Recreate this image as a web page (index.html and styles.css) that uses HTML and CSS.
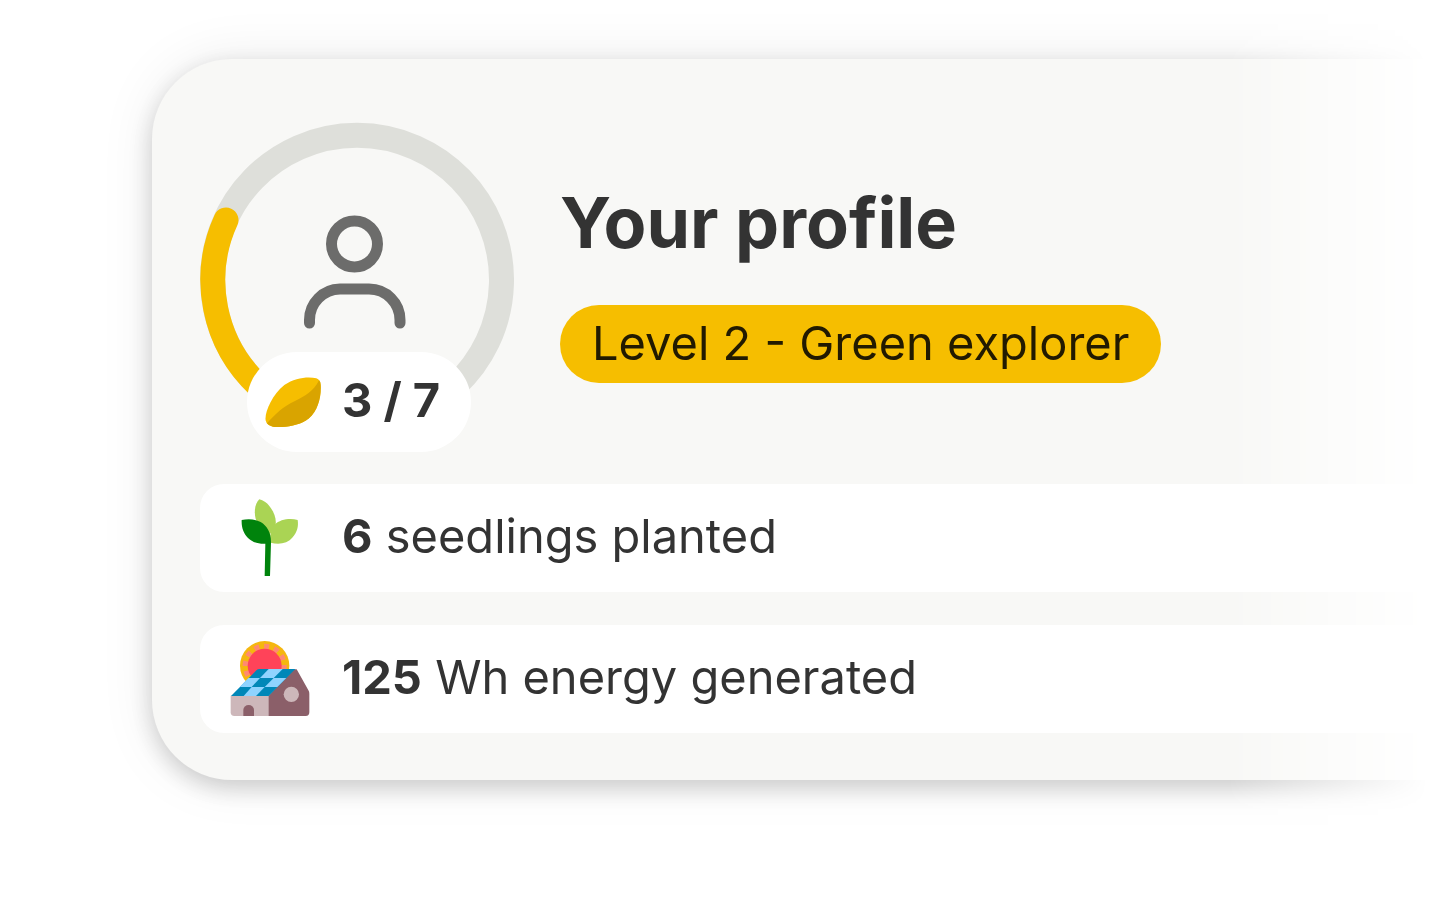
FILE: index.html
```html
<!DOCTYPE html>
<html lang="en">
<head>
    <meta charset="UTF-8">
    <meta name="viewport" content="width=device-width, initial-scale=1.0">
    <title>Your profile</title>
    <link rel="stylesheet" href="styles.css">
</head>
<body>
    <main class="stage">
        <section class="card">
            <header class="profile">
                <div class="progress">
                    <svg class="ring" viewBox="0 0 314 314" aria-hidden="true">
                        <path d="M255 264 A144.500 144.500 0 1 0 59 264" fill="none" stroke="#dedfda" stroke-width="25"/>
                        <path d="M59 264 A144.500 144.500 0 0 1 26 98" fill="none" stroke="#f6be00" stroke-width="25" stroke-linecap="round"/>
                        <g fill="none" stroke="#6c6c6b" stroke-width="11" stroke-linecap="round">
                            <circle cx="154.500" cy="122" r="23"/>
                            <path d="M109.500 201 V198 A31 31 0 0 1 140 167 H169 A31 31 0 0 1 200 198 V201"/>
                        </g>
                    </svg>
                    <div class="leaves">
                        <svg class="leaf" viewBox="0 0 168 150" aria-hidden="true">
                            <path d="M2 130 C-2 108 20 55 58 24 C90 2 130 -2 154 4 Q166 8 167 24 C169 62 158 100 132 124 C104 148 50 153 24 149 Q5 146 2 130Z" fill="#f6be00"/>
                            <path d="M6 139 C30 112 52 90 90 72 C122 56 145 44 162 10 Q167 14 167 24 C169 62 158 100 132 124 C104 148 50 153 24 149 Q11 147 6 139Z" fill="#d9a400"/>
                        </svg>
                        <strong>3 / 7</strong>
                    </div>
                </div>
                <div class="info">
                    <h1>Your profile</h1>
                    <span class="level">Level 2 - Green explorer</span>
                </div>
            </header>

            <ul class="stats">
                <li>
                    <svg class="icon" viewBox="0 0 240 240" aria-hidden="true">
                        <path d="M88 4 C76 14 71 40 77 62 C83 80 98 94 118 110 L136 88 C141 62 132 42 118 24 C110 14 100 7 88 4Z" fill="#aad454"/>
                        <path d="M203 66 C180 60 150 64 134 80 C122 94 118 114 122 134 C145 140 172 138 188 118 C202 102 206 84 203 66Z" fill="#aad454"/>
                        <path d="M35 66 C34 88 40 106 54 120 C68 134 88 138 106 137 L104 234 H120 L123 134 C124 106 112 84 92 72 C76 63 54 62 35 66Z" fill="#00830c"/>
                    </svg>
                    <p><strong>6</strong> seedlings planted</p>
                </li>
                <li>
                    <svg class="icon" viewBox="0 0 240 240" aria-hidden="true">
                        <circle cx="104" cy="80" r="74" fill="#f5b70f"/>
                        <circle cx="104" cy="80" r="58" fill="none" stroke="#ff8a70" stroke-width="16" stroke-dasharray="15 15"/>
                        <circle cx="104" cy="80" r="51" fill="#ff4359"/>
                        <path d="M2 170 H118 V231 H13 Q2 231 2 220Z" fill="#cdb7ba"/>
                        <path d="M40 231 V213 A16 15 0 0 1 72 213 V231Z" fill="#8b5f69"/>
                        <path d="M116 170 L192 91 H200 L236 155 Q238 158 238 164 V220 Q238 231 227 231 H116Z" fill="#8b5f69"/>
                        <circle cx="184" cy="166" r="23" fill="#cdb7ba"/>
                        <path d="M3 171 L80 93 Q83 90 88 90 H196 L116 171Z" fill="#0087b8"/>
                        <g fill="#8fd3ff">
                            <path d="M116 90 H158 L131 117 H90Z"/>
                            <path d="M55 117 H90 L65 144 H29Z"/>
                            <path d="M131 117 H169 L142 144 H104Z"/>
                            <path d="M65 144 H104 L78 171 H41Z"/>
                        </g>
                    </svg>
                    <p><strong>125</strong> Wh energy generated</p>
                </li>
            </ul>
        </section>
    </main>
</body>
</html>
```

FILE: styles.css
```css
* {
    box-sizing: border-box;
}
body {
    margin: 0;
    background-color: #fff;
    color: #333;
    font-family: Inter, "Liberation Sans", sans-serif;
    font-size: 47px;
}
/* the card runs off to the right and fades out */
.stage {
    padding: 59px 0 126px 152px;
    overflow: hidden;
    mask-image: linear-gradient(to right, #000 calc(100% - 210px), transparent calc(100% - 10px));
}
.card {
    margin-right: -80px;
    padding: 63px 0 47px 48px;
    background-color: #f8f8f6;
    border-radius: 80px;
    box-shadow: 0 8px 24px rgba(0, 0, 0, 0.18), 0 0 56px rgba(0, 0, 0, 0.08);
}
.profile {
    display: flex;
    gap: 46px;
}
.progress {
    position: relative;
    width: 314px;
    height: 330px;
}
.ring {
    display: block;
    width: 314px;
    height: 314px;
}
.leaves {
    position: absolute;
    left: 47px;
    bottom: 0;
    display: flex;
    align-items: center;
    gap: 21px;
    width: 224px;
    height: 100px;
    padding-left: 18px;
    background-color: #fff;
    border-radius: 50px;
}
.leaf {
    width: 56px;
    height: 50px;
}
.leaves strong {
    padding-bottom: 6px;
}
.info {
    padding-top: 65px;
}
h1 {
    margin: 0 0 46px;
    font-size: 70px;
    line-height: 72px;
}
.level {
    display: inline-block;
    height: 78px;
    padding: 0 32px;
    background-color: #f6be00;
    border-radius: 40px;
    color: #221a00;
    line-height: 76px;
}
.stats {
    display: grid;
    gap: 33px;
    margin: 32px 0 0;
    padding: 0;
    list-style: none;
}
.stats li {
    display: flex;
    align-items: center;
    gap: 32px;
    height: 108px;
    padding-left: 30px;
    background-color: #fff;
    border-radius: 24px;
}
.icon {
    width: 80px;
    height: 80px;
}
p {
    margin: 0;
    padding-bottom: 6px;
}
```
